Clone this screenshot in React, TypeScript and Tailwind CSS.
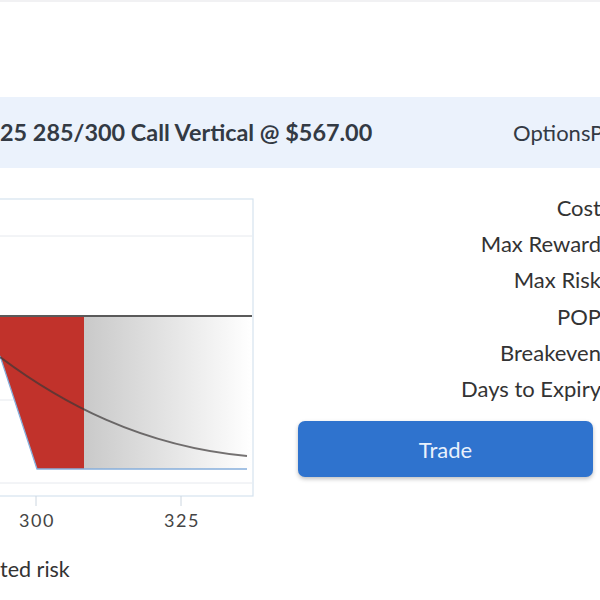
export default function App() {
  const rows = ['Cost', 'Max Reward', 'Max Risk', 'POP', 'Breakeven', 'Days to Expiry'];

  return (
    <div className="w-[600px] h-[600px] overflow-hidden bg-white text-[#333a44] font-['Lato','Noto_Sans',sans-serif]">
      <div className="h-[97px] border-t-2 border-[#f1f1f3]" />

      {/* Trade summary bar */}
      <div className="h-[71px] bg-[#ebf2fc] flex items-center justify-between whitespace-nowrap">
        <h2 className="text-[23.4px] font-bold">25 285/300 Call Vertical @ $567.00</h2>
        <span className="text-[22px] w-[87px] overflow-hidden">OptionsProfit</span>
      </div>

      <div className="flex">
        {/* Payoff chart */}
        <div className="w-[298px] shrink-0">
          <svg width="298" height="366" viewBox="0 168 298 366" className="block">
            <defs>
              <linearGradient id="fade" x1="0" x2="1" y1="0" y2="0">
                <stop offset="0" stopColor="#c9c9c9" />
                <stop offset="1" stopColor="#ffffff" />
              </linearGradient>
            </defs>
            <rect x="-2" y="199" width="255" height="297" fill="#fff" stroke="#d5e3ef" strokeWidth="1.2" />
            <line x1="0" y1="236" x2="252" y2="236" stroke="#e6e9ee" strokeWidth="1" />
            <line x1="0" y1="400" x2="252" y2="400" stroke="#e6e9ee" strokeWidth="1" />
            <line x1="0" y1="483" x2="252" y2="483" stroke="#e6e9ee" strokeWidth="1" />
            <rect x="84" y="317" width="168" height="152" fill="url(#fade)" />
            <polygon points="0,316 84,316 84,469 37,469 0,356" fill="#c1322b" />
            <polyline points="0,356 37,469 247,469" fill="none" stroke="#86aedb" strokeWidth="1.3" />
            <line x1="0" y1="316" x2="252" y2="316" stroke="#5a5a5a" strokeWidth="2.2" />
            <path d="M0,357 C60,402 140,446 247,456" fill="none" stroke="rgba(60,55,55,0.7)" strokeWidth="2" />
            <line x1="36" y1="496" x2="36" y2="506" stroke="#ccd6e0" strokeWidth="1" />
            <line x1="181" y1="496" x2="181" y2="506" stroke="#ccd6e0" strokeWidth="1" />
            <text x="37" y="527" textAnchor="middle" fontSize="18" fill="#444" letterSpacing="1.5" fontFamily="Lato, sans-serif">300</text>
            <text x="182" y="527" textAnchor="middle" fontSize="18" fill="#444" letterSpacing="1.5" fontFamily="Lato, sans-serif">325</text>
          </svg>
          <p className="mt-[25px] text-[21.5px] text-[#333] leading-none whitespace-nowrap">ted risk</p>
        </div>

        {/* Metrics + action */}
        <div className="flex-1 pt-[22px] whitespace-nowrap">
          <ul className="flex flex-col items-end mr-[-1px]">
            {rows.map((r) => (
              <li key={r} className="h-[36.2px] leading-[36px] text-[22px] text-[#333]">
                {r}
              </li>
            ))}
          </ul>
          <button className="mt-[14px] w-[295px] h-[56px] rounded-[7px] bg-[#2f73ce] text-[#e9f1fc] text-[22px] shadow-[0_2px_4px_rgba(0,0,0,0.25)]">
            Trade
          </button>
        </div>
      </div>
    </div>
  );
}
